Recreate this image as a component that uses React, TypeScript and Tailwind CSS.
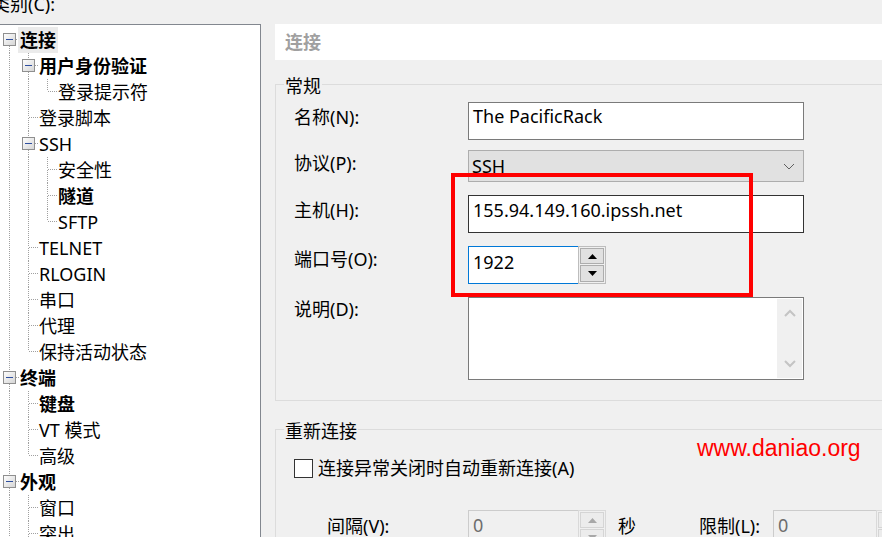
import type { ReactNode } from 'react'

type TreeRow = {
  text: string
  level: number
  bold?: boolean
  box?: boolean
  selected?: boolean
  guides: boolean[]
  top: boolean
  bottom: boolean
}

const rows: TreeRow[] = [
  { text: '连接', level: 0, bold: true, box: true, selected: true, guides: [], top: false, bottom: true },
  { text: '用户身份验证', level: 1, bold: true, box: true, guides: [true], top: true, bottom: true },
  { text: '登录提示符', level: 2, guides: [true, true], top: true, bottom: false },
  { text: '登录脚本', level: 1, guides: [true], top: true, bottom: true },
  { text: 'SSH', level: 1, box: true, guides: [true], top: true, bottom: true },
  { text: '安全性', level: 2, guides: [true, true], top: true, bottom: true },
  { text: '隧道', level: 2, bold: true, guides: [true, true], top: true, bottom: true },
  { text: 'SFTP', level: 2, guides: [true, true], top: true, bottom: false },
  { text: 'TELNET', level: 1, guides: [true], top: true, bottom: true },
  { text: 'RLOGIN', level: 1, guides: [true], top: true, bottom: true },
  { text: '串口', level: 1, guides: [true], top: true, bottom: true },
  { text: '代理', level: 1, guides: [true], top: true, bottom: true },
  { text: '保持活动状态', level: 1, guides: [true], top: true, bottom: false },
  { text: '终端', level: 0, bold: true, box: true, guides: [], top: true, bottom: true },
  { text: '键盘', level: 1, bold: true, guides: [true], top: true, bottom: true },
  { text: 'VT 模式', level: 1, guides: [true], top: true, bottom: true },
  { text: '高级', level: 1, guides: [true], top: true, bottom: false },
  { text: '外观', level: 0, bold: true, box: true, guides: [], top: true, bottom: true },
  { text: '窗口', level: 1, guides: [true], top: true, bottom: true },
  { text: '突出', level: 1, guides: [true], top: true, bottom: true },
]

const DOT = '#a0a0a0'

function Guide({ on }: { on: boolean }) {
  return (
    <svg width="19" height="26" className="shrink-0">
      {on && <line x1="9.5" y1="0" x2="9.5" y2="26" stroke={DOT} strokeDasharray="1 1" />}
    </svg>
  )
}

function Connector({ top, bottom, box }: { top: boolean; bottom: boolean; box?: boolean }) {
  return (
    <svg width="19" height="26" className="shrink-0">
      <defs>
        <linearGradient id="bx" x1="0" y1="0" x2="1" y2="1">
          <stop offset="0" stopColor="#ffffff" />
          <stop offset="1" stopColor="#d4d4d4" />
        </linearGradient>
      </defs>
      {top && <line x1="9.5" y1="0" x2="9.5" y2="12" stroke={DOT} strokeDasharray="1 1" />}
      {bottom && <line x1="9.5" y1="13" x2="9.5" y2="26" stroke={DOT} strokeDasharray="1 1" />}
      <line x1="10" y1="12.5" x2="19" y2="12.5" stroke={DOT} strokeDasharray="1 1" />
      {box && (
        <>
          <rect x="3.5" y="6.5" width="12" height="12" fill="url(#bx)" stroke="#8f8f8f" />
          <line x1="6" y1="12.5" x2="13" y2="12.5" stroke="#2f4f9f" />
        </>
      )}
    </svg>
  )
}

function Tree() {
  return (
    <div className="-ml-px h-[600px] w-[262px] shrink-0 overflow-hidden border border-[#82878f] bg-white pt-[2px]">
      {rows.map((r) => (
        <div key={r.text} className="flex h-[26px] items-center">
          {r.guides.map((g, i) => (
            <Guide key={i} on={g} />
          ))}
          <Connector top={r.top} bottom={r.bottom} box={r.box} />
          <span
            className={`-ml-px whitespace-nowrap px-[2px] leading-[26px] ${r.bold ? 'font-bold' : ''} ${
              r.selected ? 'bg-[#ebebeb]' : ''
            }`}
          >
            {r.text}
          </span>
        </div>
      ))}
    </div>
  )
}

function Arrow({ up, color }: { up: boolean; color: string }) {
  return (
    <svg width="9" height="5" viewBox="0 0 9 5">
      <path d={up ? 'M0 5 L4.5 0 L9 5 Z' : 'M0 0 L4.5 5 L9 0 Z'} fill={color} />
    </svg>
  )
}

function Spin({ disabled }: { disabled?: boolean }) {
  const btn = disabled
    ? 'border-[#d5d5d5] bg-[#ececec]'
    : 'border-[#adadad] bg-[#e1e1e1]'
  const c = disabled ? '#a8a8a8' : '#000000'
  return (
    <div
      className={`-ml-px flex h-[38px] w-[28px] shrink-0 flex-col gap-px border p-px ${
        disabled ? 'border-[#d9d9d9]' : 'border-[#bdbdbd]'
      }`}
    >
      <div className={`flex h-[16px] items-center justify-center border ${btn}`}>
        <Arrow up color={c} />
      </div>
      <div className={`flex h-[17px] items-center justify-center border ${btn}`}>
        <Arrow up={false} color={c} />
      </div>
    </div>
  )
}

function FormRow({ label, pt, children, className = '' }: { label: string; pt: string; children: ReactNode; className?: string }) {
  return (
    <div className={`flex items-start ${className}`}>
      <div className={`w-[174px] shrink-0 leading-[24px] ${pt}`}>{label}</div>
      {children}
    </div>
  )
}

function Chevron({ up, color, w = 2 }: { up: boolean; color: string; w?: number }) {
  return (
    <svg width="12" height="8" viewBox="0 0 12 8">
      <path d={up ? 'M1 7 L6 2 L11 7' : 'M1 1 L6 6 L11 1'} fill="none" stroke={color} strokeWidth={w} />
    </svg>
  )
}

export default function App() {
  return (
    <div className="relative h-[537px] w-[882px] overflow-hidden bg-[#f0f0f0] font-['Noto_Sans','Noto_Sans_CJK_SC',sans-serif] text-[18px] text-black">
      <div className="-ml-[8px] h-[24px] leading-[8px]">类别(C):</div>

      <div className="flex items-start">
        <Tree />

        <div className="ml-[14px] w-[640px] shrink-0">
          <div className="h-[36px] bg-white pl-[10px] font-bold leading-[36px] text-[#a0a0a0]">连接</div>

          <fieldset className="mt-[12px] border border-[#dcdcdc]">
            <legend className="ml-[8px] px-px pt-[4px] leading-[20px]">常规</legend>
            <div className="pb-[20px] pl-[18px] pt-[6px]">
              <FormRow label="名称(N):" pt="pt-[3px]">
                <div className="h-[38px] w-[336px] border border-[#7a7a7a] bg-white pl-[4px] pt-px leading-[24px]">
                  The PacificRack
                </div>
              </FormRow>

              <FormRow label="协议(P):" pt="pt-px" className="mt-[10px]">
                <div className="flex h-[32px] w-[336px] items-start justify-between border border-[#adadad] bg-[#e1e1e1] pl-[3px] pt-[3px] leading-[24px]">
                  <span>SSH</span>
                  <span className="mr-[8px] mt-[9px]">
                    <Chevron up={false} color="#606060" w={1} />
                  </span>
                </div>
              </FormRow>

              <FormRow label="主机(H):" pt="pt-[3px]" className="mt-[13px]">
                <div className="h-[38px] w-[336px] border border-[#333333] bg-white pl-[4px] pt-[2px] leading-[24px]">
                  155.94.149.160.ipssh.net
                </div>
              </FormRow>

              <FormRow label="端口号(O):" pt="pt-px" className="mt-[13px]">
                <div className="flex">
                  <div className="h-[38px] w-[111px] border border-[#0078d7] bg-white pl-[4px] pt-[3px] leading-[24px]">1922</div>
                  <Spin />
                </div>
              </FormRow>

              <FormRow label="说明(D):" pt="pt-0" className="mt-[13px]">
                <div className="flex h-[83px] w-[336px] justify-end border border-[#7a7a7a] bg-white p-px">
                  <div className="flex w-[25px] flex-col items-center justify-between bg-[#f0f0f0] py-[10px]">
                    <Chevron up color="#c4c4c4" />
                    <Chevron up={false} color="#c4c4c4" />
                  </div>
                </div>
              </FormRow>
            </div>
          </fieldset>

          <fieldset className="mt-[16px] border border-[#dcdcdc]">
            <legend className="ml-[8px] px-px pt-[4px] leading-[20px]">重新连接</legend>
            <div className="pl-[18px] pt-[18px]">
              <div className="flex h-[19px] items-center">
                <div className="h-[19px] w-[19px] shrink-0 border border-[#333333] bg-white" />
                <span className="ml-[5px] whitespace-nowrap leading-[19px]">连接异常关闭时自动重新连接(A)</span>
              </div>

              <div className="mt-[32px] flex items-start pb-[20px]">
                <div className="ml-[33px] w-[141px] shrink-0 pt-[4px] leading-[24px]">间隔(V):</div>
                <div className="flex">
                  <div className="h-[38px] w-[111px] border border-[#cccccc] bg-[#f0f0f0] pl-[4px] pt-[2px] leading-[24px] text-[#6d6d6d]">0</div>
                  <Spin disabled />
                </div>
                <div className="ml-[12px] w-[81px] shrink-0 pt-[4px] leading-[24px]">秒</div>
                <div className="w-[74px] shrink-0 whitespace-nowrap pt-[4px] leading-[24px]">限制(L):</div>
                <div className="flex">
                  <div className="h-[38px] w-[104px] border border-[#cccccc] bg-[#f0f0f0] pl-[4px] pt-[2px] leading-[24px] text-[#6d6d6d]">0</div>
                  <Spin disabled />
                </div>
              </div>
            </div>
          </fieldset>
        </div>
      </div>

      <div className="pointer-events-none absolute left-[451px] top-[173px] h-[124px] w-[302px] border-[4px] border-[#ff0000]" />
      <div className="absolute left-[697px] top-[437px] whitespace-nowrap font-['Liberation_Sans',sans-serif] text-[23px] leading-none text-[#ff0000]">
        www.daniao.org
      </div>
    </div>
  )
}
